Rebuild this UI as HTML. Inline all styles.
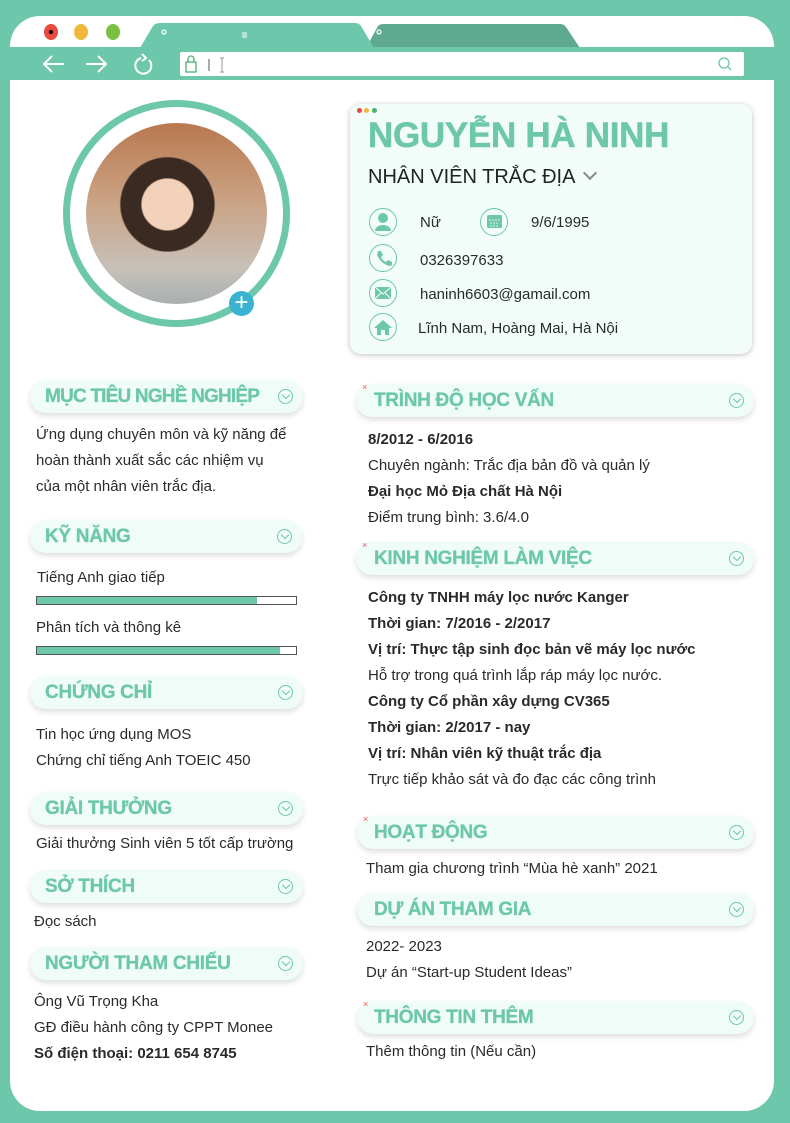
<!DOCTYPE html>
<html><head><meta charset="utf-8">
<style>
*{margin:0;padding:0;box-sizing:border-box}
body{width:790px;height:1123px;background:#6dc7ab;position:relative;overflow:hidden;font-family:"Liberation Sans",sans-serif;color:#2a2a2a}
.a{position:absolute}
.win{left:10px;top:16px;width:764px;height:1095px;background:#fff;border-radius:30px}
.hd{position:absolute;height:33px;background:#f0fcf8;border-radius:16px;box-shadow:0 3px 6px rgba(0,0,0,.13);color:#6dc7ab;font-weight:bold;font-size:19px;letter-spacing:-0.3px;-webkit-text-stroke:0.3px #6dc7ab;line-height:33px;padding-left:15px;white-space:nowrap}
.hd .c{position:absolute;right:10px;top:9px;width:15px;height:15px;border:1.3px solid #6dc7ab;border-radius:50%;-webkit-text-stroke:0}
.hd .c:after{content:"";position:absolute;left:3.5px;top:2px;width:5px;height:5px;border-right:1.3px solid #6dc7ab;border-bottom:1.3px solid #6dc7ab;transform:rotate(45deg)}
.hd .x{position:absolute;left:6px;top:-2px;color:#e55;font-size:9px;line-height:10px;font-weight:normal;-webkit-text-stroke:0}
.t{position:absolute;font-size:15px;line-height:26px;white-space:nowrap}
.b{font-weight:bold}
.bar{position:absolute;left:36px;width:261px;height:9px;border:1px solid #555;background:#fff}
.bar i{display:block;height:100%;background:#6dc7ab}
.ic{position:absolute;width:28px;height:28px;border:1px solid #6dc7ab;border-radius:50%}
</style></head><body>
<div class="a win"></div>
<div class="a" style="left:44px;top:24px;width:14px;height:16px;border-radius:50%;background:#e9483c"></div>
<div class="a" style="left:49px;top:30px;width:4px;height:4px;border-radius:50%;background:#000"></div>
<div class="a" style="left:74px;top:24px;width:14px;height:16px;border-radius:50%;background:#f0b83c"></div>
<div class="a" style="left:106px;top:24px;width:14px;height:16px;border-radius:50%;background:#7bc043"></div>
<svg class="a" style="left:0;top:0" width="790" height="82">
<path d="M366 48 L378 26 Q380 24 384 24 L560 24 Q564 24 566 27 L580 48 Z" fill="#5ea990"/>
<path d="M140 48 L153 26 Q155 23 160 23 L355 23 Q359 23 361 26 L374 48 Z" fill="#6dc7ab"/>
<circle cx="164" cy="32" r="2" fill="none" stroke="#fff" stroke-width="1.2"/>
<circle cx="379" cy="32" r="2" fill="none" stroke="#fff" stroke-width="1.2"/>
<path d="M242 33h5M242 35h5M242 37h5" stroke="#fff" stroke-width="1"/>
<rect x="10" y="47" width="764" height="33" fill="#6dc7ab"/>
<rect x="180" y="52" width="564" height="24" rx="2" fill="#fff"/>
<path d="M44 64h20M52 56l-8 8 8 8" stroke="#fff" stroke-width="2" fill="none"/>
<path d="M86 64h20M98 56l8 8-8 8" stroke="#fff" stroke-width="2" fill="none"/>
<path d="M141 58a8 8 0 1 0 8 2" stroke="#fff" stroke-width="2" fill="none"/><path d="M142 54l4 4-4 3" stroke="#fff" stroke-width="2" fill="none"/>
<rect x="186" y="62" width="10" height="10" fill="none" stroke="#4cb070" stroke-width="1.3"/><path d="M188 62v-3a3 3 0 0 1 6 0v3" fill="none" stroke="#4cb070" stroke-width="1.3"/>
<path d="M209 59v12" stroke="#555"/><path d="M222 58v14M220 58h4M220 72h4" stroke="#999"/>
<circle cx="724" cy="63" r="5" fill="none" stroke="#6dc7ab" stroke-width="1.3"/><path d="M728 67l3 3" stroke="#6dc7ab" stroke-width="1.3"/>
</svg>
<div class="a" style="left:63px;top:100px;width:227px;height:227px;border:7px solid #6dc7ab;border-radius:50%"></div>
<div class="a" style="left:86px;top:123px;width:181px;height:181px;border-radius:50%;overflow:hidden;background:radial-gradient(circle at 45% 45%,#f3d2bb 0 18%,#3a2a22 19% 33%,transparent 34%),linear-gradient(180deg,#b87850 0%,#caa080 40%,#c8c0b8 80%,#a8b0b0 100%)"></div>
<div class="a" style="left:229px;top:291px;width:25px;height:25px;border-radius:50%;background:#3ab3d1;color:#fff;font-size:24px;line-height:24px;text-align:center">+</div>
<div class="a" style="left:350px;top:104px;width:402px;height:250px;background:#f2fdf9;border-radius:11px;box-shadow:0 1px 6px rgba(0,0,0,.25)"></div>
<div class="a" style="left:357px;top:108px;width:5px;height:5px;border-radius:50%;background:#e9483c"></div>
<div class="a" style="left:364px;top:108px;width:5px;height:5px;border-radius:50%;background:#f0b83c"></div>
<div class="a" style="left:372px;top:108px;width:5px;height:5px;border-radius:50%;background:#4cb070"></div>
<div class="a b" style="left:368px;top:113px;font-size:35px;line-height:46px;letter-spacing:-0.3px;color:#6dc7ab;-webkit-text-stroke:0.5px #6dc7ab;white-space:nowrap">NGUYỄN HÀ NINH</div>
<div class="a" style="left:368px;top:163px;font-size:20px;line-height:28px;color:#222;white-space:nowrap">NHÂN VIÊN TRẮC ĐỊA</div>
<div class="a" style="left:585px;top:168px;width:10px;height:10px;border-right:2.5px solid #888;border-bottom:2.5px solid #888;transform:rotate(45deg)"></div>
<div class="ic" style="left:369px;top:208px"><svg width="26" height="26"><circle cx="13" cy="9" r="5" fill="#6dc7ab"/><path d="M5 22a8 6 0 0 1 16 0z" fill="#6dc7ab"/></svg></div>
<div class="ic" style="left:480px;top:208px"><svg width="26" height="26"><rect x="6" y="6" width="15" height="13" rx="1.5" fill="#6dc7ab"/><path d="M8 11h11M9 14h9M9 17h9" stroke="#fff" stroke-width=".8" stroke-dasharray="2 1"/></svg></div>
<div class="ic" style="left:369px;top:244px"><svg width="26" height="26"><path d="M8 6l3 0 2 4-2 2q2 4 5 5l2-2 4 2v3l-2 1q-8-1-13-11z" fill="#6dc7ab"/></svg></div>
<div class="ic" style="left:369px;top:279px"><svg width="26" height="26"><rect x="5" y="7" width="16" height="12" fill="#6dc7ab"/><path d="M5 7l8 7 8-7M5 19l6-6M21 19l-6-6" stroke="#fff" fill="none"/></svg></div>
<div class="ic" style="left:369px;top:313px"><svg width="26" height="26"><path d="M4 14l9-8 9 8h-3v7h-4v-5h-4v5h-4v-7z" fill="#6dc7ab"/></svg></div>
<div class="t" style="left:420px;top:210px">Nữ</div>
<div class="t" style="left:531px;top:210px">9/6/1995</div>
<div class="t" style="left:420px;top:248px">0326397633</div>
<div class="t" style="left:420px;top:282px">haninh6603@gamail.com</div>
<div class="t" style="left:418px;top:316px">Lĩnh Nam, Hoàng Mai, Hà Nội</div>
<div class="hd" style="left:30px;top:380px;width:273px;letter-spacing:-0.8px">MỤC TIÊU NGHỀ NGHIỆP<span class="c"></span></div>
<div class="t" style="left:36px;top:422px;line-height:26px">Ứng dụng chuyên môn và kỹ năng để<br>hoàn thành xuất sắc các nhiệm vụ<br>của một nhân viên trắc địa.</div>
<div class="hd" style="left:30px;top:520px;width:272px">KỸ NĂNG<span class="c"></span></div>
<div class="t" style="left:37px;top:565px">Tiếng Anh giao tiếp</div>
<div class="bar" style="top:596px"><i style="width:85%"></i></div>
<div class="t" style="left:36px;top:615px">Phân tích và thông kê</div>
<div class="bar" style="top:646px"><i style="width:94%"></i></div>
<div class="hd" style="left:30px;top:676px;width:273px">CHỨNG CHỈ<span class="c"></span></div>
<div class="t" style="left:36px;top:722px">Tin học ứng dụng MOS<br>Chứng chỉ tiếng Anh TOEIC 450</div>
<div class="hd" style="left:30px;top:792px;width:273px">GIẢI THƯỞNG<span class="c"></span></div>
<div class="t" style="left:36px;top:831px">Giải thưởng Sinh viên 5 tốt cấp trường</div>
<div class="hd" style="left:30px;top:870px;width:273px">SỞ THÍCH<span class="c"></span></div>
<div class="t" style="left:34px;top:909px">Đọc sách</div>
<div class="hd" style="left:30px;top:947px;width:273px">NGƯỜI THAM CHIẾU<span class="c"></span></div>
<div class="t" style="left:34px;top:989px">Ông Vũ Trọng Kha<br>GĐ điều hành công ty CPPT Monee<br><span class="b">Số điện thoại: 0211 654 8745</span></div>
<div class="hd" style="left:356px;top:384px;width:398px;padding-left:18px"><span class="x">×</span>TRÌNH ĐỘ HỌC VẤN<span class="c"></span></div>
<div class="t" style="left:368px;top:427px"><span class="b">8/2012 - 6/2016</span><br>Chuyên ngành: Trắc địa bản đồ và quản lý<br><span class="b">Đại học Mỏ Địa chất Hà Nội</span><br>Điểm trung bình: 3.6/4.0</div>
<div class="hd" style="left:356px;top:542px;width:398px;padding-left:18px"><span class="x">×</span>KINH NGHIỆM LÀM VIỆC<span class="c"></span></div>
<div class="t" style="left:368px;top:585px"><span class="b">Công ty TNHH máy lọc nước Kanger<br>Thời gian: 7/2016 - 2/2017<br>Vị trí: Thực tập sinh đọc bản vẽ máy lọc nước</span><br>Hỗ trợ trong quá trình lắp ráp máy lọc nước.<br><span class="b">Công ty Cổ phần xây dựng CV365<br>Thời gian: 2/2017 - nay<br>Vị trí: Nhân viên kỹ thuật trắc địa</span><br>Trực tiếp khảo sát và đo đạc các công trình</div>
<div class="hd" style="left:357px;top:816px;width:397px;padding-left:17px"><span class="x">×</span>HOẠT ĐỘNG<span class="c"></span></div>
<div class="t" style="left:366px;top:856px">Tham gia chương trình “Mùa hè xanh” 2021</div>
<div class="hd" style="left:357px;top:893px;width:397px;padding-left:17px">DỰ ÁN THAM GIA<span class="c"></span></div>
<div class="t" style="left:366px;top:934px">2022- 2023<br>Dự án “Start-up Student Ideas”</div>
<div class="hd" style="left:357px;top:1001px;width:397px;padding-left:17px"><span class="x">×</span>THÔNG TIN THÊM<span class="c"></span></div>
<div class="t" style="left:366px;top:1039px">Thêm thông tin (Nếu cần)</div>
</body></html>
